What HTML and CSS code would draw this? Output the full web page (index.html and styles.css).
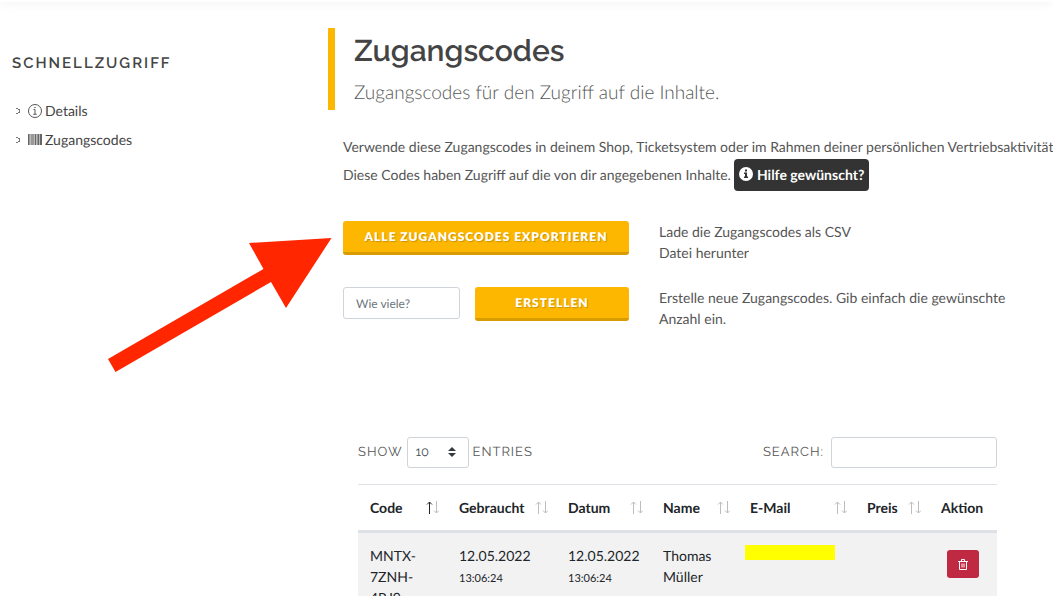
FILE: index.html
```html
<!DOCTYPE html>
<html lang="de">
<head>
  <meta charset="UTF-8">
  <meta name="viewport" content="width=device-width, initial-scale=1.0">
  <title>Zugangscodes</title>
  <link rel="stylesheet" href="styles.css">
</head>
<body>
  <svg class="sprite" aria-hidden="true">
    <symbol id="sort" viewBox="0 0 13 13">
      <path class="up" d="M3.5 13V1M1 3.5L3.5 1L6 3.5" />
      <path class="down" d="M10.5 0V12M8 9.5L10.5 12L13 9.5" />
    </symbol>
  </svg>

  <header class="topbar"></header>

  <div class="page">
    <aside class="sidebar">
      <h4>Schnellzugriff</h4>
      <ul>
        <li>
          <svg class="bullet" viewBox="0 0 4 6"><path d="M0 0h2v1h-2zM2 1h2v1h-2zM3 2h1v2h-1zM2 4h2v1h-2zM0 5h2v1h-2z" /></svg>
          <a href="#">
            <svg class="icon" viewBox="0 0 14 14" fill="none" stroke="#555">
              <circle cx="7" cy="7" r="6.5" />
              <path d="M5.5 5.5H7V10M5.3 10.3H8.7" />
              <path d="M6.3 3.5H7.7" />
            </svg>
            Details
          </a>
        </li>
        <li>
          <svg class="bullet" viewBox="0 0 4 6"><path d="M0 0h2v1h-2zM2 1h2v1h-2zM3 2h1v2h-1zM2 4h2v1h-2zM0 5h2v1h-2z" /></svg>
          <a href="#">
            <svg class="icon" viewBox="0 0 14 14">
              <path fill="#666" d="M0 1h1v11H0zM7 1h1v11H7zM10 1h1v11h-1zM12 1h2v11h-2z" />
              <path fill="#999" d="M1 1h1v11H1zM3 1h3v11H3zM9 1h1v11H9z" />
              <path fill="#bbb" d="M2 1h1v11H2zM6 1h1v11H6zM8 1h1v11H8zM11 1h1v11h-1z" />
            </svg>
            Zugangscodes
          </a>
        </li>
      </ul>
    </aside>

    <main class="main">
      <div class="title">
        <h1>Zugangscodes</h1>
        <p>Zugangscodes für den Zugriff auf die Inhalte.</p>
      </div>

      <div class="content">
        <p class="intro">
          Verwende diese Zugangscodes in deinem Shop, Ticketsystem oder im Rahmen deiner persönlichen Vertriebsaktivitäten.<br>
          Diese Codes haben Zugriff auf die von dir angegebenen Inhalte.
          <button class="help" type="button"><svg viewBox="0 0 14 14"><circle cx="7" cy="7" r="7" fill="#fff" /><path fill="#333" d="M6 2.5h2v2H6zM5 5.5h3v4h1v1.5H5V9.500h1V7H5z" /></svg> Hilfe gewünscht?</button>
        </p>

        <div class="action">
          <div class="controls">
            <button class="btn" type="button">Alle Zugangscodes exportieren</button>
          </div>
          <p class="short">Lade die Zugangscodes als CSV Datei herunter</p>
        </div>

        <form class="action">
          <div class="controls">
            <input class="amount" type="text" placeholder="Wie viele?" aria-label="Wie viele?">
            <button class="btn" type="button">Erstellen</button>
          </div>
          <p>Erstelle neue Zugangscodes. Gib einfach die gewünschte Anzahl ein.</p>
        </form>

        <div class="codes">
          <div class="filters">
            <label class="length">Show
              <span class="select">
                <select>
                  <option>10</option>
                  <option>25</option>
                  <option>50</option>
                </select>
                <svg viewBox="0 0 8 10"><path d="M4 0L8 4H0zM0 6H8L4 10z" /></svg>
              </span>
              entries
            </label>
            <label class="search">Search: <input type="search"></label>
          </div>

          <table>
            <colgroup>
              <col class="col-code">
              <col class="col-used">
              <col class="col-date">
              <col class="col-name">
              <col class="col-mail">
              <col class="col-price">
              <col class="col-action">
            </colgroup>
            <thead>
              <tr>
                <th><div class="head asc">Code <svg><use href="#sort" /></svg></div></th>
                <th><div class="head">Gebraucht <svg><use href="#sort" /></svg></div></th>
                <th><div class="head">Datum <svg><use href="#sort" /></svg></div></th>
                <th><div class="head">Name <svg><use href="#sort" /></svg></div></th>
                <th><div class="head">E-Mail <svg><use href="#sort" /></svg></div></th>
                <th><div class="head">Preis <svg><use href="#sort" /></svg></div></th>
                <th><div class="head">Aktion</div></th>
              </tr>
            </thead>
            <tbody>
              <tr>
                <td>MNTX-7ZNH-4RJ9</td>
                <td>12.05.2022<br><small>13:06:24</small></td>
                <td>12.05.2022<br><small>13:06:24</small></td>
                <td>Thomas Müller</td>
                <td><div class="marker"></div></td>
                <td></td>
                <td>
                  <button class="delete" type="button" aria-label="Löschen">
                    <svg viewBox="0 0 10 11" fill="none" stroke="#fff">
                      <path d="M0 2.500H10M3.500 2V0.500H6.500V2M1.500 3V10.500H8.500V3M4 4.500V8.500M6 4.500V8.500" />
                    </svg>
                  </button>
                </td>
              </tr>
            </tbody>
          </table>
        </div>
      </div>
    </main>
  </div>

  <svg class="arrow" viewBox="0 0 224 134" aria-hidden="true">
    <path d="M223.500 0L141 5L155.500 31L0 121L7.500 134L163 44L178 70Z" />
  </svg>
</body>
</html>
```

FILE: styles.css
```css
* {
  box-sizing: border-box;
}
body {
  margin: 0;
  height: 100vh;
  overflow: hidden;
  font-family: Lato, sans-serif;
  font-size: 14px;
  line-height: 21px;
  color: #555;
  background-color: #fff;
  text-rendering: geometricPrecision;
}
h1, h4, p, ul {
  margin: 0;
  padding: 0;
}
button, input, select {
  font-family: inherit;
  text-rendering: inherit;
}
.sprite {
  display: none;
}
.topbar {
  height: 2px;
  box-shadow: 0 0 10px rgba(0, 0, 0, 0.15);
}
.page {
  display: flex;
  padding-top: 26px;
}

/* sidebar */
.sidebar {
  flex: 0 0 328px;
  padding: 25px 12px;
}
.sidebar h4 {
  font-family: Raleway, Lato, sans-serif;
  font-size: 15px;
  font-weight: 600;
  letter-spacing: 2px;
  text-transform: uppercase;
  color: #444;
}
.sidebar ul {
  list-style: none;
  padding-top: 22px;
}
.sidebar li {
  display: flex;
  align-items: center;
  height: 29px;
  padding-left: 4px;
}
.sidebar a {
  display: flex;
  align-items: center;
  gap: 3px;
  color: #444;
  text-decoration: none;
}
.bullet {
  width: 4px;
  height: 6px;
  margin-right: 8px;
  fill: #777;
}
.icon {
  width: 14px;
  height: 14px;
}

/* main column */
.main {
  flex: 1;
  min-width: 0;
}
.title {
  height: 82px;
  padding: 6px 19px;
  border-left: 7px solid #fdb700;
}
.title h1 {
  font-family: Raleway, Lato, sans-serif;
  font-size: 30px;
  font-weight: 600;
  line-height: 36px;
  color: #444;
}
.title p {
  padding-top: 8px;
  font-size: 19px;
  font-weight: 300;
  line-height: 30px;
}
.content {
  padding: 23px 41px 0 15px;
}
.intro {
  padding-bottom: 8px;
  line-height: 28px;
  white-space: nowrap;
}
.help {
  height: 32px;
  margin: -4px 0;
  padding: 0 5px;
  border: none;
  border-radius: 4px;
  background-color: #333;
  color: #fff;
  font-size: 14px;
  font-weight: 700;
}
.help svg {
  width: 14px;
  height: 14px;
  vertical-align: -1px;
}
.action {
  display: flex;
  gap: 30px;
  padding-top: 24px;
}
.controls {
  display: flex;
  flex: 0 0 286px;
  align-items: flex-start;
  gap: 15px;
}
.action p {
  max-width: 354px;
}
.action .short {
  max-width: 206px;
}
.btn {
  flex: 1;
  height: 34px;
  border: none;
  border-bottom: 3px solid #d99c00;
  border-radius: 3px;
  background-color: #fdb700;
  color: #fff;
  font-size: 12px;
  font-weight: 800;
  letter-spacing: 1px;
  text-transform: uppercase;
  text-shadow: 1px 1px 1px rgba(0, 0, 0, 0.2);
}
.amount {
  width: 117px;
  height: 32px;
  padding: 0 12px;
  border: 1px solid #ced4da;
  border-radius: 3px;
  font-size: 12px;
}
.amount::placeholder {
  color: #6c757d;
}

/* codes table */
.codes {
  padding: 108px 15px 0;
}
.filters {
  display: flex;
  justify-content: space-between;
  padding-bottom: 16px;
}
.filters label {
  display: flex;
  align-items: center;
  font-family: Raleway, Lato, sans-serif;
  font-size: 13px;
  letter-spacing: 1px;
  text-transform: uppercase;
}
.length {
  gap: 4px;
}
.search {
  gap: 7px;
}
.select {
  position: relative;
}
.select select {
  width: 62px;
  height: 31px;
  padding: 0 8px;
  border: 1px solid #ced4da;
  border-radius: 3px;
  background-color: #fff;
  color: #495057;
  font-size: 13px;
  appearance: none;
}
.select svg {
  position: absolute;
  top: 10px;
  right: 13px;
  width: 8px;
  height: 10px;
  fill: #343a40;
}
.search input {
  width: 166px;
  height: 31px;
  border: 1px solid #ced4da;
  border-radius: 3px;
}
table {
  width: 100%;
  table-layout: fixed;
  border-collapse: separate;
  border-spacing: 0;
  color: #212529;
}
.col-code { width: 89px; }
.col-used { width: 109px; }
.col-date { width: 95px; }
.col-name { width: 87px; }
.col-mail { width: 117px; }
.col-price { width: 74px; }
.col-action { width: 68px; }
th {
  padding: 12px 8px 12px 12px;
  border-top: 1px solid #dee2e6;
  border-bottom: 3px solid #dee2e6;
  text-align: left;
}
.head {
  display: flex;
  align-items: center;
  justify-content: space-between;
}
.head svg {
  width: 13px;
  height: 13px;
  fill: none;
  stroke: #bcbdbe;
}
.up {
  stroke: var(--up, #bcbdbe);
}
.asc {
  --up: #212529;
}
td {
  padding: 12px 8px 12px 12px;
  background-color: #f2f2f2;
  vertical-align: top;
}
small {
  font-size: 11px;
}
.marker {
  width: 90px;
  height: 15px;
  margin-left: -5px;
  background-color: #ff0;
}
.delete {
  display: flex;
  align-items: center;
  justify-content: center;
  width: 32px;
  height: 28px;
  margin: 5px 6px;
  border: none;
  border-radius: 3px;
  background-color: #c02942;
}
.delete svg {
  width: 10px;
  height: 11px;
}

/* pointer drawn over the page */
.arrow {
  position: absolute;
  top: 238px;
  left: 108px;
  width: 224px;
  height: 134px;
  fill: #ff2600;
}
```
